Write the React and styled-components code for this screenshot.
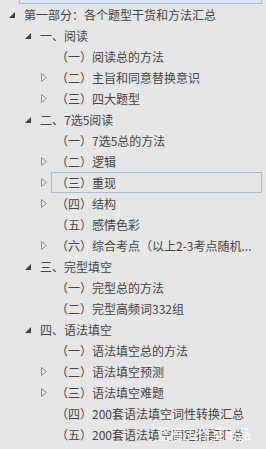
import React from 'react';
import styled, { createGlobalStyle } from 'styled-components';

const GlobalStyle = createGlobalStyle`
  html, body {
    margin: 0;
    padding: 0;
    background: #e6e6e6;
    overflow: hidden;
  }
`;

const Panel = styled.div`
  position: relative;
  width: 266px;
  height: 449px;
  overflow: hidden;
  background: #e6e6e6;
  font-family: "Noto Sans CJK SC", "Microsoft YaHei", sans-serif;
  font-size: 12px;
  color: #444;
`;

const Tree = styled.ul`
  list-style: none;
  margin: -17px 0 0;
  padding: 0;
`;

const Row = styled.li`
  display: flex;
  align-items: center;
  height: 21px;
  padding-left: ${(p) => 6 + p.$depth * 16}px;
  padding-right: 4px;
`;

const Arrow = styled.span`
  display: flex;
  align-items: center;
  justify-content: center;
  width: 12px;
  height: 21px;
  flex: none;
`;

const Label = styled.span`
  flex: 1;
  min-width: 0;
  height: 21px;
  box-sizing: border-box;
  margin-left: 1px;
  padding: 0 4px;
  line-height: 19px;
  white-space: nowrap;
  overflow: hidden;
  border: 1px solid ${(p) => (p.$state ? '#a9bdd9' : 'transparent')};
  background: ${(p) => (p.$state === 'selected' ? '#dce6f4' : 'transparent')};
`;

const Watermark = styled.div`
  position: absolute;
  right: 15px;
  bottom: 8px;
  font-size: 13.5px;
  line-height: 16px;
  color: rgba(255, 255, 255, 0.92);
`;

const Expanded = () => (
  <svg width="6" height="6" viewBox="0 0 6 6">
    <polygon points="6,0 6,6 0,6" fill="#404040" />
  </svg>
);

const Collapsed = () => (
  <svg width="6" height="9" viewBox="0 0 6 9">
    <polygon points="0.5,0.5 5.5,4.5 0.5,8.5" fill="none" stroke="#8c8c8c" strokeWidth="1" />
  </svg>
);

const items = [
  { d: 0, a: null, t: '', s: 'selected' },
  { d: 0, a: 'open', t: '第一部分：各个题型干货和方法汇总' },
  { d: 1, a: 'open', t: '一、阅读' },
  { d: 2, a: null, t: '（一）阅读总的方法' },
  { d: 2, a: 'closed', t: '（二）主旨和同意替换意识' },
  { d: 2, a: 'closed', t: '（三）四大题型' },
  { d: 1, a: 'open', t: '二、7选5阅读' },
  { d: 2, a: null, t: '（一）7选5总的方法' },
  { d: 2, a: 'closed', t: '（二）逻辑' },
  { d: 2, a: 'closed', t: '（三）重现', s: 'hover' },
  { d: 2, a: 'closed', t: '（四）结构' },
  { d: 2, a: null, t: '（五）感情色彩' },
  { d: 2, a: 'closed', t: '（六）综合考点（以上2-3考点随机...' },
  { d: 1, a: 'open', t: '三、完型填空' },
  { d: 2, a: null, t: '（一）完型总的方法' },
  { d: 2, a: null, t: '（二）完型高频词332组' },
  { d: 1, a: 'open', t: '四、语法填空' },
  { d: 2, a: null, t: '（一）语法填空总的方法' },
  { d: 2, a: 'closed', t: '（二）语法填空预测' },
  { d: 2, a: 'closed', t: '（三）语法填空难题' },
  { d: 2, a: null, t: '（四）200套语法填空词性转换汇总' },
  { d: 2, a: null, t: '（五）200套语法填空固定搭配汇总' },
];

export default function App() {
  return (
    <Panel>
      <GlobalStyle />
      <Tree>
        {items.map((it, i) => (
          <Row key={i} $depth={it.d}>
            <Arrow>
              {it.a === 'open' && <Expanded />}
              {it.a === 'closed' && <Collapsed />}
            </Arrow>
            <Label $state={it.s}>{it.t}</Label>
          </Row>
        ))}
      </Tree>
      <Watermark>蓝雁工作室出品</Watermark>
    </Panel>
  );
}
